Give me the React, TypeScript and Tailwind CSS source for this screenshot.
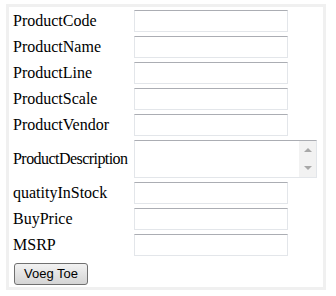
const fields = [
  "ProductCode",
  "ProductName",
  "ProductLine",
  "ProductScale",
  "ProductVendor",
];

const fieldsAfter = ["quatityInStock", "BuyPrice", "MSRP"];

function TextBox() {
  return (
    <div className="h-[22px] w-[154px] border border-[#e3e6ea] border-t-[#abadb3] bg-white" />
  );
}

function Row({ label, tight, children }: { label: string; tight?: boolean; children: React.ReactNode }) {
  return (
    <div className="flex items-center">
      <span
        className={
          tight
            ? "w-[121px] shrink-0 whitespace-nowrap text-[16px] leading-none tracking-[-0.55px] text-black"
            : "w-[121px] shrink-0 whitespace-nowrap text-[16px] leading-none text-black"
        }
      >
        {label}
      </span>
      {children}
    </div>
  );
}

export default function App() {
  return (
    <div className="h-[296px] w-[336px] bg-white pl-[6px] pt-[4px]">
      <div
        className="h-[286px] w-[320px] border-[3px] border-[#f0f0f0] pl-[4px] pt-[3px]"
        style={{ fontFamily: '"Liberation Serif", "Times New Roman", serif' }}
      >
        <div className="flex flex-col gap-[4px]">
          {fields.map((f) => (
            <Row key={f} label={f}>
              <TextBox />
            </Row>
          ))}

          {/* textarea with scrollbar */}
          <Row label="ProductDescription" tight>
            <div className="flex h-[38px] w-[183px] border border-[#e3e6ea] border-t-[#abadb3] bg-white">
              <div className="flex-1" />
              <div className="flex w-[17px] flex-col items-center justify-between bg-[#f2f2f2] py-[7px]">
                <div className="h-0 w-0 border-x-[4px] border-b-[4px] border-x-transparent border-b-[#a8a8a8]" />
                <div className="h-0 w-0 border-x-[4px] border-t-[4px] border-x-transparent border-t-[#a8a8a8]" />
              </div>
            </div>
          </Row>

          {fieldsAfter.map((f) => (
            <Row key={f} label={f}>
              <TextBox />
            </Row>
          ))}

          <div className="pl-[1px] pt-[1px]">
            <button
              className="h-[22px] w-[74px] rounded-[3px] border border-[#707070] bg-gradient-to-b from-[#f2f2f2] to-[#d4d4d4] text-[13px] leading-none text-black"
              style={{ fontFamily: '"Liberation Sans", Arial, sans-serif' }}
            >
              Voeg Toe
            </button>
          </div>
        </div>
      </div>
    </div>
  );
}
